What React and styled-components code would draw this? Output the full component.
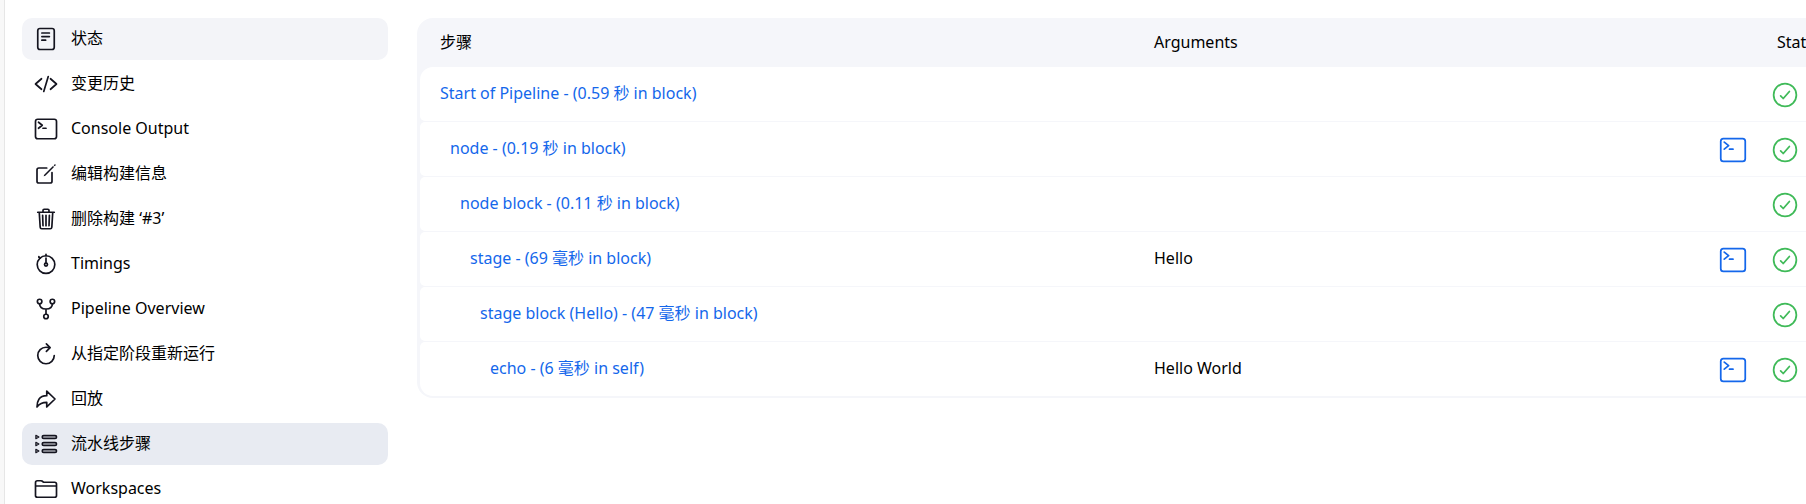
import React from 'react';
import styled, { createGlobalStyle, css } from 'styled-components';

const GlobalStyle = createGlobalStyle`
  * {
    box-sizing: border-box;
  }

  body {
    margin: 0;
    background: #fff;
    color: #14141f;
    font-family: "Noto Sans", "Noto Sans CJK SC", sans-serif;
    font-size: 16px;
    line-height: 24px;
    overflow-x: hidden;
  }
`;

const Page = styled.div`
  display: flex;
  align-items: stretch;
  min-height: 100vh;
  overflow: hidden;
  border-left: 4px solid #f8f8f8;
`;

const Sidebar = styled.nav`
  flex: none;
  width: 384px;
  padding: 18px 0 0 17px;
  border-left: 1px solid #e6e6e6;
`;

const TaskList = styled.ul`
  display: flex;
  flex-direction: column;
  gap: 3px;
  margin: 0;
  padding: 0;
  list-style: none;
`;

const tones = {
  hover: '#f3f4f8',
  active: '#e8ebf2',
};

const TaskLink = styled.a`
  display: flex;
  align-items: center;
  gap: 13px;
  height: 42px;
  padding: 0 12px 2px;
  border-radius: 10px;
  background: ${props => tones[props.$tone] || 'transparent'};
  color: #000;
  text-decoration: none;
  white-space: nowrap;
`;

const Icon = styled.svg`
  display: block;
  flex: none;
  width: ${props => props.$size || 24}px;
  height: ${props => props.$size || 24}px;
  fill: none;
  stroke: currentColor;
  stroke-width: 32;
  stroke-linecap: round;
  stroke-linejoin: round;
`;

const TaskIcon = styled(Icon)`
  margin-top: 2px;
  color: #14141f;
  stroke-width: 36;
`;

const Main = styled.main`
  flex: 1;
  min-width: 0;
  padding: 18px 0 0 29px;
`;

/* the last column runs past the right edge of the window */
const TableFrame = styled.div`
  width: calc(100% + 52px);
  padding: 0 3px 1px;
  border-radius: 16px;
  background: #f5f6fa;
`;

const Table = styled.table`
  width: 100%;
  table-layout: fixed;
  border-collapse: separate;
  border-spacing: 0 1px;
`;

const cell = css`
  padding: 0 20px 2px;
  text-align: left;
  white-space: nowrap;
`;

const HeadCell = styled.th`
  ${cell}
  width: ${props => props.$width || 'auto'};
  height: 47px;
  padding-left: ${props => props.$left || 20}px;
  font-weight: 400;
  color: #000;
`;

const Cell = styled.td`
  ${cell}
  height: 54px;
  background: #fff;
  color: #000;

  &:first-child {
    border-radius: 5px 0 0 5px;
  }

  tr:first-child > &:first-child {
    border-top-left-radius: 13px;
  }

  tr:last-child > &:first-child {
    border-bottom-left-radius: 13px;
  }
`;

const IconCell = styled(Cell)`
  padding: 1px 0 0 ${props => props.$left}px;
`;

const StepLink = styled.a`
  margin-left: ${props => props.$depth * 10}px;
  color: #1467eb;
  text-decoration: none;
`;

const ConsoleLink = styled.a`
  display: block;
  width: 28px;
  color: #1467eb;
`;

const StatusIcon = styled(Icon)`
  color: #3fba58;
`;

const terminal = (
  <>
    <rect x="32" y="48" width="448" height="416" rx="48" />
    <path d="M96 112l80 64-80 64M192 240h64" />
  </>
);

const icons = {
  status: (
    <>
      <rect x="80" y="32" width="352" height="448" rx="48" />
      <path d="M168 128h160M168 204h160M168 280h80" />
    </>
  ),
  changes: <path d="M160 368L32 256l128-112M352 368l128-112-128-112M304 96l-96 320" />,
  terminal,
  edit: (
    <>
      <path d="M384 224v184a40 40 0 01-40 40H104a40 40 0 01-40-40V168a40 40 0 0140-40h167.48" />
      <path d="M459.94 53.25a16.06 16.06 0 00-23.22-.56L424.35 65a8 8 0 000 11.31l11.34 11.32a8 8 0 0011.34 0l12.06-12c6.1-6.09 6.67-16.01.85-22.38zM399.34 90L218.82 270.2a9 9 0 00-2.31 3.93L208.16 299a3.91 3.91 0 004.86 4.86l24.85-8.35a9 9 0 003.93-2.31L422 112.66a9 9 0 000-12.66l-9.95-10a9 9 0 00-12.71 0z" fill="currentColor" stroke="none" />
    </>
  ),
  trash: (
    <path d="M112 112l20 320c.95 18.49 14.4 32 32 32h184c17.67 0 30.87-13.51 32-32l20-320M80 112h352M192 112V72a23.93 23.93 0 0124-24h80a23.93 23.93 0 0124 24v40M256 176v224M184 176l8 224M328 176l-8 224" />
  ),
  timings: (
    <>
      <circle cx="256" cy="268" r="188" />
      <circle cx="256" cy="268" r="32" />
      <path d="M256 236V128M256 80V48M112 112l20 20M104 96v16" />
    </>
  ),
  fork: (
    <>
      <circle cx="256" cy="416" r="48" />
      <circle cx="120" cy="96" r="48" />
      <circle cx="392" cy="96" r="48" />
      <path d="M120 144c0 76 50 112 136 112s136-36 136-112M256 256v112" />
    </>
  ),
  restart: (
    <path d="M336 128s-24-16-80-16a176 176 0 10176 176M264 40l80 80-80 80" />
  ),
  replay: (
    <path d="M448 256L272 88v96C103.57 184 64 304.77 64 424c48.61-62.24 91.6-96 208-96v96z" />
  ),
  steps: (
    <>
      <rect x="176" y="76" width="304" height="60" rx="30" />
      <rect x="176" y="226" width="304" height="60" rx="30" />
      <rect x="176" y="376" width="304" height="60" rx="30" />
      <path d="M40 70l64 36-64 36zM40 220l64 36-64 36zM40 370l64 36-64 36z" strokeWidth="26" />
    </>
  ),
  folder: (
    <path d="M440 432H72a40 40 0 01-40-40V120a40 40 0 0140-40h75.89a40 40 0 0122.19 6.72l27.84 18.56a40 40 0 0022.19 6.72H440a40 40 0 0140 40v240a40 40 0 01-40 40zM32 192h448" />
  ),
};

const tasks = [
  { icon: 'status', label: '状态', tone: 'hover' },
  { icon: 'changes', label: '变更历史' },
  { icon: 'terminal', label: 'Console Output' },
  { icon: 'edit', label: '编辑构建信息' },
  { icon: 'trash', label: '删除构建 ‘#3’' },
  { icon: 'timings', label: 'Timings' },
  { icon: 'fork', label: 'Pipeline Overview' },
  { icon: 'restart', label: '从指定阶段重新运行' },
  { icon: 'replay', label: '回放' },
  { icon: 'steps', label: '流水线步骤', tone: 'active' },
  { icon: 'folder', label: 'Workspaces' },
];

const steps = [
  { label: 'Start of Pipeline - (0.59 秒 in block)' },
  { label: 'node - (0.19 秒 in block)', log: true },
  { label: 'node block - (0.11 秒 in block)' },
  { label: 'stage - (69 毫秒 in block)', args: 'Hello', log: true },
  { label: 'stage block (Hello) - (47 毫秒 in block)' },
  { label: 'echo - (6 毫秒 in self)', args: 'Hello World', log: true },
];

const StepRow = ({ step, depth }) => (
  <tr>
    <Cell>
      <StepLink href="#step" $depth={depth}>{step.label}</StepLink>
    </Cell>
    <Cell>{step.args}</Cell>
    <IconCell $left={16}>
      {step.log && (
        <ConsoleLink href="#log" aria-label="Console Output">
          <Icon viewBox="0 0 512 512" $size={28}>{terminal}</Icon>
        </ConsoleLink>
      )}
    </IconCell>
    <IconCell $left={12}>
      <StatusIcon viewBox="0 0 512 512" $size={28} role="img" aria-label="Success">
        <circle cx="256" cy="256" r="208" />
        <path d="M336 192L224 320l-48-48" />
      </StatusIcon>
    </IconCell>
  </tr>
);

const App = () => (
  <>
    <GlobalStyle />
    <Page>
      <Sidebar>
        <TaskList>
          {tasks.map(task => (
            <li key={task.icon}>
              <TaskLink href={`#${task.icon}`} $tone={task.tone}>
                <TaskIcon viewBox="0 0 512 512" aria-hidden="true">{icons[task.icon]}</TaskIcon>
                {task.label}
              </TaskLink>
            </li>
          ))}
        </TaskList>
      </Sidebar>
      <Main>
        <TableFrame>
          <Table>
            <thead>
              <tr>
                <HeadCell $width="714px">步骤</HeadCell>
                <HeadCell>Arguments</HeadCell>
                <HeadCell $width="56px" aria-label="Log" />
                <HeadCell $width="96px" $left={18}>Status</HeadCell>
              </tr>
            </thead>
            <tbody>
              {steps.map((step, i) => (
                <StepRow key={step.label} step={step} depth={i} />
              ))}
            </tbody>
          </Table>
        </TableFrame>
      </Main>
    </Page>
  </>
);

export default App;
